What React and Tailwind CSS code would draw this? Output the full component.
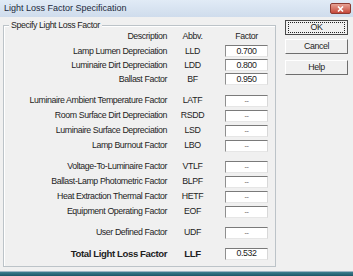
import React from "react";

const font = { fontFamily: '"Liberation Sans", Arial, sans-serif' };

const groups = [
  [
    ["Lamp Lumen Depreciation", "LLD", "0.700"],
    ["Luminaire Dirt Depreciation", "LDD", "0.800"],
    ["Ballast Factor", "BF", "0.950"],
  ],
  [
    ["Luminaire Ambient Temperature Factor", "LATF", "--"],
    ["Room Surface Dirt Depreciation", "RSDD", "--"],
    ["Luminaire Surface Depreciation", "LSD", "--"],
    ["Lamp Burnout Factor", "LBO", "--"],
  ],
  [
    ["Voltage-To-Luminaire Factor", "VTLF", "--"],
    ["Ballast-Lamp Photometric Factor", "BLPF", "--"],
    ["Heat Extraction Thermal Factor", "HETF", "--"],
    ["Equipment Operating Factor", "EOF", "--"],
  ],
  [["User Defined Factor", "UDF", "--"]],
];

/* sunken edit box */
function ValueBox({ value }) {
  const dash = value === "--";
  return (
    <div className="ml-[7px] w-[43px] h-[12px] flex items-center justify-center bg-white border border-t-[#7a7a7a] border-l-[#8f8f8f] border-r-[#d8d8d8] border-b-[#e6e6e6]">
      <span className={dash ? "text-[7px] leading-none text-[#555]" : "leading-none text-[#222]"}>{value}</span>
    </div>
  );
}

function Row({ desc, abbv, value, h, bold }) {
  return (
    <div className={`flex items-center ${h}`}>
      <div className={`w-[163px] text-right whitespace-nowrap ${bold ? "font-bold text-[9.6px]" : ""}`}>{desc}</div>
      <div className={`w-[51px] text-center ${bold ? "font-bold text-[9.6px]" : ""}`}>{abbv}</div>
      <ValueBox value={value} />
    </div>
  );
}

function WinButton({ label, focused, className }) {
  return (
    <div
      className={`h-[15px] w-[63px] flex items-center justify-center bg-[#f0f0f0] border ${
        focused
          ? "border-[#4a4a4a]"
          : "border-t-white border-l-white border-r-[#6e6e6e] border-b-[#6e6e6e]"
      } ${className}`}
    >
      {focused ? (
        <div className="w-[57px] h-[11px] flex items-center justify-center border border-dotted border-[#222]">
          {label}
        </div>
      ) : (
        label
      )}
    </div>
  );
}

export default function App() {
  return (
    <div className="w-[353px] h-[276px] flex flex-col text-[8.8px] tracking-[-0.4px] leading-none text-[#1e1e1e] overflow-hidden" style={font}>
      {/* Title bar */}
      <div className="h-[17px] flex items-center justify-between pl-[4px] pr-[2px] bg-gradient-to-b from-[#e1ebf6] to-[#cfdcec]">
        <span className="text-[9px] tracking-normal text-[#1c2a3c]">Light Loss Factor Specification</span>
        <div className="w-[21px] h-[11px] rounded-[2px] border border-[#8d3b32] bg-gradient-to-b from-[#e6a295] to-[#c5473a] flex items-center justify-center">
          <svg width="7" height="6" viewBox="0 0 7 6">
            <path d="M1 0.5 L6 5.5 M6 0.5 L1 5.5" stroke="#fff" strokeWidth="1.6" />
          </svg>
        </div>
      </div>

      {/* Body */}
      <div className="h-[254px] flex items-start pl-[3px] bg-[#f0f0f0]">
        {/* Group box */}
        <div className="mt-[8px] w-[273px] h-[242px] border border-[#bcc3c8] shadow-[inset_1px_1px_0_#ffffff]">
          <div className="-mt-[6px] ml-[5px] w-fit px-[2px] leading-[10px] bg-[#f0f0f0]">Specify Light Loss Factor</div>

          <div className="flex items-center h-[14px] -mt-[1px]">
            <div className="w-[163px] text-right">Description</div>
            <div className="w-[51px] text-center">Abbv.</div>
            <div className="ml-[7px] w-[43px] text-center">Factor</div>
          </div>

          <div className="mt-[1px]">
            {groups[0].map(([d, a, v]) => (
              <Row key={a} desc={d} abbv={a} value={v} h="h-[14px]" />
            ))}
          </div>
          {groups.slice(1).map((g, i) => (
            <div key={i} className={i === 0 ? "mt-[7px]" : "mt-[6px]"}>
              {g.map(([d, a, v]) => (
                <Row key={a} desc={d} abbv={a} value={v} h="h-[15px]" />
              ))}
            </div>
          ))}
          <div className="mt-[6px]">
            <Row desc="Total Light Loss Factor" abbv="LLF" value="0.532" h="h-[15px]" bold />
          </div>
        </div>

        {/* Buttons */}
        <div className="ml-[9px] mt-[3px] flex flex-col">
          <WinButton label="OK" focused />
          <WinButton label="Cancel" className="mt-[4px]" />
          <WinButton label="Help" className="mt-[6px]" />
        </div>
      </div>

      {/* bottom frame */}
      <div className="h-[1px] bg-[#9fb4c4]" />
      <div className="flex-1 bg-gradient-to-b from-[#3f7f90] to-[#1d5566]" />
    </div>
  );
}
